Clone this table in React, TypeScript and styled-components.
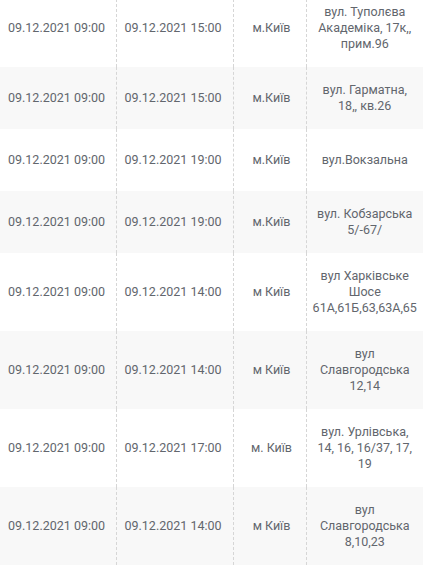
import React from "react";
import styled, { createGlobalStyle } from "styled-components";

const GlobalStyle = createGlobalStyle`
  html, body {
    margin: 0;
    padding: 0;
    background: #fff;
    overflow: hidden;
  }
`;

/**
 * Page wrapper, scrolled a little so the first row is cut off at the top.
 */
const Page = styled.div`
  width: 423px;
  margin-top: -11px;
  font-family: Roboto, "Liberation Sans", sans-serif;
  font-size: 12.5px;
  line-height: 16px;
  color: #62666d;
`;

const Table = styled.table`
  width: 423px;
  border-collapse: collapse;
  table-layout: fixed;
`;

interface ColProps {
  /**
   * Column width in pixels.
   */
  $width: number;
}

const Col = styled.col<ColProps>`
  width: ${(props) => props.$width}px;
`;

interface RowProps {
  /**
   * Gray background for every second row.
   */
  $shaded: boolean;
}

const Row = styled.tr<RowProps>`
  height: 62px;
  background: ${(props) => (props.$shaded ? "#f8f8f8" : "#fff")};
`;

interface CellProps {
  /**
   * Text alignment inside the cell.
   */
  $align: "left" | "center";
}

const Cell = styled.td<CellProps>`
  padding: 15px 4px 15px 8px;
  text-align: ${(props) => props.$align};
  vertical-align: middle;
  border-right: 1px dashed #d6d6d6;

  &:last-child {
    border-right: none;
    padding: 15px 3px;
  }
`;

interface Outage {
  start: string;
  end: string;
  city: string;
  address: string[];
}

const rows: Outage[] = [
  {
    start: "09.12.2021 09:00",
    end: "09.12.2021 15:00",
    city: "м.Київ",
    address: ["вул. Туполєва", "Академіка, 17к,,", "прим.96"],
  },
  {
    start: "09.12.2021 09:00",
    end: "09.12.2021 15:00",
    city: "м.Київ",
    address: ["вул. Гарматна,", "18,, кв.26"],
  },
  {
    start: "09.12.2021 09:00",
    end: "09.12.2021 19:00",
    city: "м.Київ",
    address: ["вул.Вокзальна"],
  },
  {
    start: "09.12.2021 09:00",
    end: "09.12.2021 19:00",
    city: "м.Київ",
    address: ["вул. Кобзарська", "5/-67/"],
  },
  {
    start: "09.12.2021 09:00",
    end: "09.12.2021 14:00",
    city: "м Київ",
    address: ["вул Харківське", "Шосе", "61А,61Б,63,63А,65"],
  },
  {
    start: "09.12.2021 09:00",
    end: "09.12.2021 14:00",
    city: "м Київ",
    address: ["вул", "Славгородська", "12,14"],
  },
  {
    start: "09.12.2021 09:00",
    end: "09.12.2021 17:00",
    city: "м. Київ",
    address: ["вул. Урлівська,", "14, 16, 16/37, 17,", "19"],
  },
  {
    start: "09.12.2021 09:00",
    end: "09.12.2021 14:00",
    city: "м Київ",
    address: ["вул", "Славгородська", "8,10,23"],
  },
];

const columnWidths = [116, 117, 73, 117];

const App: React.FC = () => (
  <>
    <GlobalStyle />
    <Page>
      <Table>
        <colgroup>
          {columnWidths.map((w, i) => (
            <Col key={i} $width={w} />
          ))}
        </colgroup>
        <tbody>
          {rows.map((row, i) => (
            <Row key={i} $shaded={i % 2 === 1}>
              <Cell $align="left">{row.start}</Cell>
              <Cell $align="left">{row.end}</Cell>
              <Cell $align="center">{row.city}</Cell>
              <Cell $align="center">
                {row.address.map((line, j) => (
                  <React.Fragment key={j}>
                    {j > 0 && <br />}
                    {line}
                  </React.Fragment>
                ))}
              </Cell>
            </Row>
          ))}
        </tbody>
      </Table>
    </Page>
  </>
);

export default App;
